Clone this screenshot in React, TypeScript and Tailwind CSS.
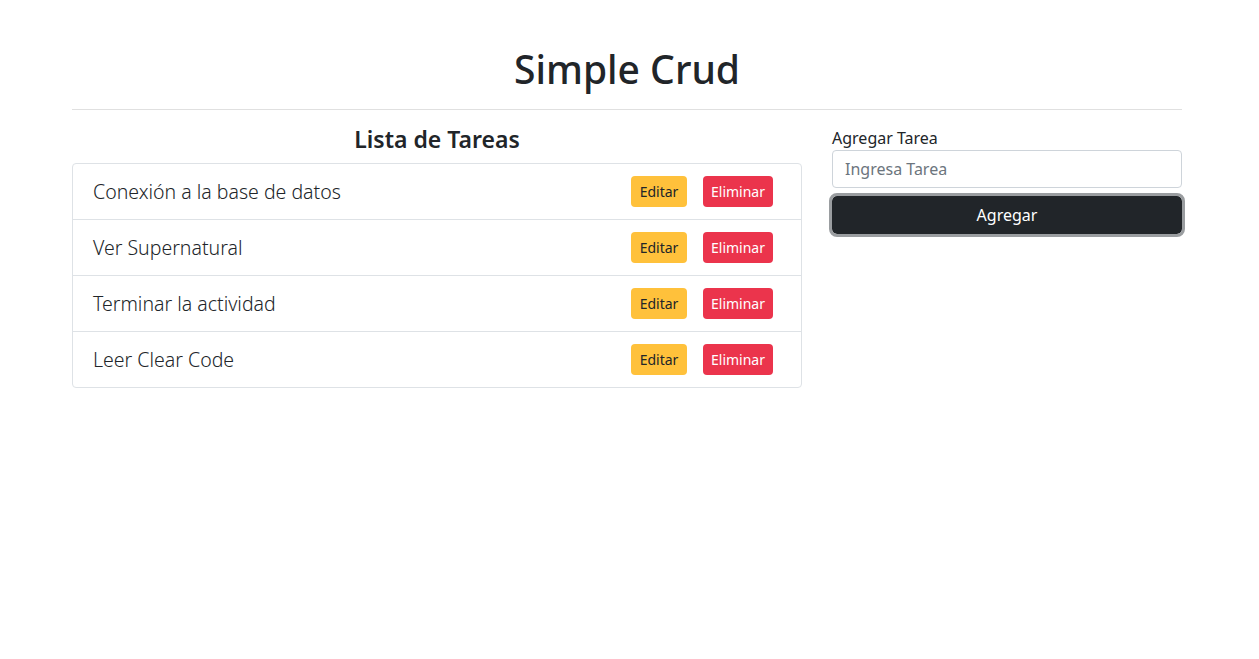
import React from "react"

const tareas = [
  "Conexión a la base de datos",
  "Ver Supernatural",
  "Terminar la actividad",
  "Leer Clear Code",
]

function TaskItem({ text, last }: { text: string; last: boolean }) {
  return (
    <li
      className={
        "flex items-center justify-between pl-[20px] pr-[28px] " +
        (last ? "h-[55px]" : "h-[56px] border-b border-[#dee2e6]")
      }
    >
      <span className="text-[19.5px] font-light text-[#212529]">{text}</span>
      <div className="flex gap-[16px]">
        <button className="h-[31px] w-[56px] rounded-[4px] bg-[#ffc13b] text-[14px] text-[#212529]">
          Editar
        </button>
        <button className="h-[31px] w-[70px] rounded-[4px] bg-[#eb344c] text-[14px] text-white">
          Eliminar
        </button>
      </div>
    </li>
  )
}

export default function App() {
  return (
    <div
      className="min-h-screen bg-white text-[#212529]"
      style={{ fontFamily: '"Noto Sans", "Open Sans", sans-serif' }}
    >
      <div className="ml-[72px] w-[1110px] pt-[45px]">
        <h1 className="text-center text-[39px] font-medium leading-[48px]">Simple Crud</h1>
        <hr className="mt-[16px] border-t border-[#e0e0e0]" />
        <div className="mt-[16px] flex gap-[30px]">
          <div className="w-[730px]">
            <h3 className="text-center text-[23px] font-semibold leading-[27px]">Lista de Tareas</h3>
            <ul className="mt-[10px] rounded-[4px] border border-[#dee2e6]">
              {tareas.map((t, i) => (
                <TaskItem key={t} text={t} last={i === tareas.length - 1} />
              ))}
            </ul>
          </div>
          <div className="w-[350px]">
            <label className="block text-[16px] leading-[24px]">Agregar Tarea</label>
            <input
              className="block h-[38px] w-full rounded-[4px] border border-[#ced4da] px-[12px] text-[16px] placeholder:text-[#6c757d]"
              placeholder="Ingresa Tarea"
            />
            <button className="mt-[8px] h-[38px] w-full rounded-[5px] bg-[#212529] text-[16px] text-white outline-[3px] outline-[#9a9da0] outline-solid">
              Agregar
            </button>
          </div>
        </div>
      </div>
    </div>
  )
}
